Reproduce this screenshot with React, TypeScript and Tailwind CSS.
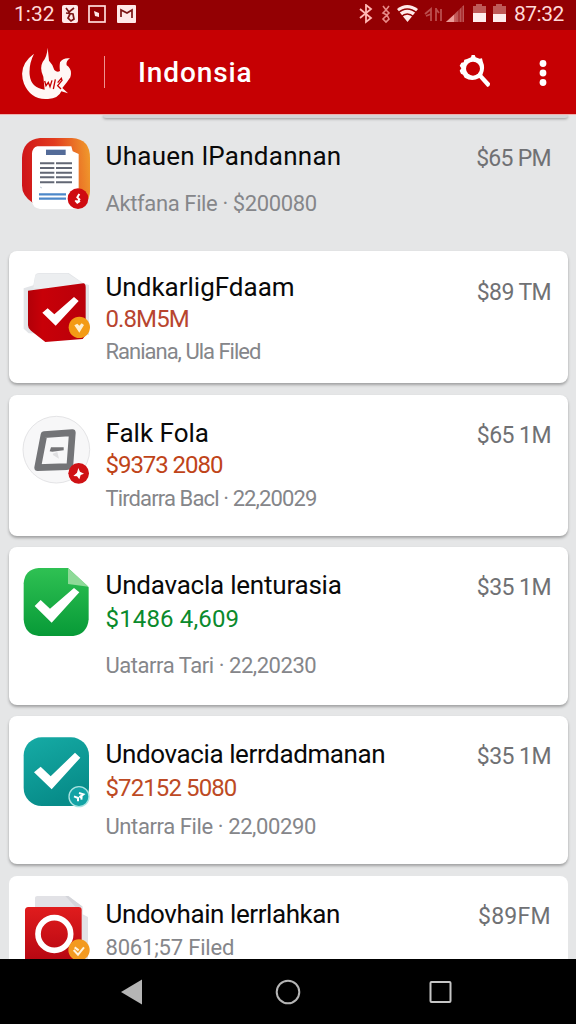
import React from "react";

type Row = {
  title: string;
  titleClass: string;
  amount?: string;
  amountClass?: string;
  detail: string;
  detailClass: string;
  price: string;
  priceClass: string;
  cardClass: string;
  textClass: string;
  icon: React.ReactNode;
};

const ReportIcon = () => (
  <>
    <defs>
      <linearGradient id="report" x1="0" x2="1" y1="0.3" y2="0.2">
        <stop offset="0" stopColor="#cf1519" />
        <stop offset="0.5" stopColor="#e23c1e" />
        <stop offset="1" stopColor="#f09a2c" />
      </linearGradient>
    </defs>
    <path d="M54 12H150Q204 15 204 72V170Q204 210 160 222L32 206Q0 185 0 155V72Q2 18 54 12Z" fill="url(#report)" />
    <path d="M46 37H148L152 52L170 60V170L196 200Q185 224 150 225H54Q32 222 30 202V58Q32 40 46 37Z" fill="#fff" />
    <path d="M72 47H131V63H72Z" fill="#536b98" />
    <path d="M54 88H97M102 88H150M54 102H97M102 102H150M54 116H97M102 116H150M54 130H97M102 130H150M54 145H97M102 145H150" stroke="#626774" strokeWidth="6" />
    <path d="M51 181H132M51 194H132" stroke="#4c88c9" strokeWidth="7" />
    <path d="M54 159L60 162" stroke="#c3ced9" strokeWidth="3" />
    <circle cx="168" cy="194" r="31" fill="#cf0b11" />
    <path d="M172 180L166 190L172 196L166 205M160 199L166 206L174 201" stroke="#fff" strokeWidth="6" fill="none" />
  </>
);

const BoxIcon = () => (
  <>
    <defs>
      <linearGradient id="box" x1="0" x2="1">
        <stop offset="0" stopColor="#b20008" />
        <stop offset="0.25" stopColor="#c80008" />
        <stop offset="1" stopColor="#b9000a" />
      </linearGradient>
    </defs>
    <path d="M5 55L34 46L40 14Q43 9 52 9H140L184 40L201 45V195L20 190L5 176Z" fill="#e3e5e8" />
    <path d="M34 55L40 16Q43 11 52 11H138L182 40L105 58Z" fill="#eceef0" />
    <path d="M18 62L184 40Q191 41 191 52V195L182 207L70 216L27 182Q18 176 18 166Z" fill="url(#box)" />
    <path d="M61 128L77 115L97 133L156 81L170 93L101 167Z" fill="#fff" />
    <circle cx="172" cy="172" r="32" fill="#f39b16" />
    <path d="M157 166L166 161L172 167L179 160L186 165L172 188Z" fill="#fff0d0" />
  </>
);

const FrameIcon = () => (
  <>
    <circle cx="103" cy="107" r="100" fill="#f7f7f8" stroke="#e4e4e6" strokeWidth="3" />
    <path d="M66 62L151 56L144 150Q142 158 135 158L47 161Z" fill="#f7f7f8" stroke="#737477" strokeWidth="20" strokeLinejoin="round" />
    <path d="M83 112L87 100H125V109L91 113Z" fill="#747477" />
    <path d="M92 119L106 114L111 134L94 124Z" fill="#dfdfe1" />
    <circle cx="170" cy="178" r="31" fill="#cf1114" />
    <path d="M169 162L174 173L186 179L176 183L172 196L165 187L154 186L165 176Z" fill="#fff" />
  </>
);

const GreenIcon = () => (
  <>
    <defs>
      <linearGradient id="green" x1="0" x2="0" y1="0" y2="1">
        <stop offset="0" stopColor="#2fc153" />
        <stop offset="1" stopColor="#079a37" />
      </linearGradient>
    </defs>
    <path d="M50 6H138L200 64V160Q196 204 154 210H50Q8 206 5 160V52Q8 10 50 6Z" fill="url(#green)" />
    <path d="M138 6L200 62L138 54Z" fill="#8eda98" />
    <path d="M38 120L56 102L84 128L156 66L172 79L89 170Z" fill="#fff" />
  </>
);

const TealIcon = () => (
  <>
    <defs>
      <linearGradient id="teal" x1="0" x2="0.4" y1="0" y2="1">
        <stop offset="0" stopColor="#16aba5" />
        <stop offset="1" stopColor="#078c89" />
      </linearGradient>
    </defs>
    <rect x="5" y="7" width="196" height="206" rx="54" fill="url(#teal)" />
    <path d="M36 112L56 95L86 124L159 53L175 68L89 163Z" fill="#fff" />
    <circle cx="171" cy="185" r="30" fill="#12a3a5" stroke="#a9e3e0" strokeWidth="4" />
    <path d="M156 184L168 189L168 199M171 174L184 178L172 187M180 176L178 194" stroke="#fff" strokeWidth="6" fill="none" />
  </>
);

const RecordIcon = () => (
  <>
    <defs>
      <linearGradient id="record" x1="0" x2="0" y1="0" y2="1">
        <stop offset="0" stopColor="#e01c1d" />
        <stop offset="1" stopColor="#b60712" />
      </linearGradient>
    </defs>
    <path d="M39 40V8Q39 3 46 3H139L182 35V58L198 66V200H150V40Z" fill="#e2e2e6" />
    <path d="M130 3H139L182 35H160Z" fill="#d4d5da" />
    <path d="M19 36H170Q179 36 179 45V200H9V47Q9 36 19 36Z" fill="url(#record)" />
    <circle cx="97" cy="117" r="49" fill="none" stroke="#fff" strokeWidth="17" />
    <circle cx="171" cy="165" r="32" fill="#f39a20" />
    <path d="M155 165L168 179L186 157M158 157L170 166" stroke="#fff3dd" strokeWidth="6" fill="none" />
  </>
);

const rows: Row[] = [
  {
    title: "Uhauen lPandannan",
    titleClass: "tracking-[0.27px]",
    detail: "Aktfana File · $200080",
    detailClass: "mt-[18px] tracking-[-0.38px]",
    price: "$65 PM",
    priceClass: "mt-[28px] tracking-[-0.7px]",
    cardClass: "h-[136px]",
    textClass: "mt-[25px]",
    icon: <ReportIcon />,
  },
  {
    title: "UndkarligFdaam",
    titleClass: "",
    amount: "0.8M5M",
    amountClass: "tracking-[-0.9px] text-[#b8452f]",
    detail: "Raniana, Ula Filed",
    detailClass: "mt-[3px] tracking-[-1px]",
    price: "$89 TM",
    priceClass: "mt-[26px] tracking-[-0.6px]",
    cardClass: "h-[132px] bg-white shadow-[0_2px_3px_rgba(0,0,0,0.3)]",
    textClass: "mt-[20px]",
    icon: <BoxIcon />,
  },
  {
    title: "Falk Fola",
    titleClass: "",
    amount: "$9373 2080",
    amountClass: "tracking-[-1.05px] text-[#bf4419]",
    detail: "Tirdarra Bacl · 22,20029",
    detailClass: "mt-[4px] tracking-[-0.88px]",
    price: "$65 1M",
    priceClass: "mt-[25px] tracking-[-0.55px]",
    cardClass: "mt-3 h-[141px] bg-white shadow-[0_2px_3px_rgba(0,0,0,0.3)]",
    textClass: "mt-[22px]",
    icon: <FrameIcon />,
  },
  {
    title: "Undavacla lenturasia",
    titleClass: "tracking-[-0.22px]",
    amount: "$1486 4,609",
    amountClass: "mt-[2px] tracking-[0.15px] text-[#0a8a2c]",
    detail: "Uatarra Tari · 22,20230",
    detailClass: "mt-[17px] tracking-[-0.45px]",
    price: "$35 1M",
    priceClass: "mt-[25px] tracking-[-0.55px]",
    cardClass: "mt-[11px] h-[158px] bg-white shadow-[0_2px_3px_rgba(0,0,0,0.3)]",
    textClass: "mt-[22px]",
    icon: <GreenIcon />,
  },
  {
    title: "Undovacia lerrdadmanan",
    titleClass: "tracking-[-0.39px]",
    amount: "$72152 5080",
    amountClass: "mt-[2px] tracking-[-0.9px] text-[#bd4a24]",
    detail: "Untarra File · 22,00290",
    detailClass: "mt-[9px] tracking-[-0.4px]",
    price: "$35 1M",
    priceClass: "mt-[25px] tracking-[-0.55px]",
    cardClass: "mt-[11px] h-[148px] bg-white shadow-[0_2px_3px_rgba(0,0,0,0.3)]",
    textClass: "mt-[22px]",
    icon: <TealIcon />,
  },
  {
    title: "Undovhain lerrlahkan",
    titleClass: "tracking-[-0.42px]",
    detail: "8061;57 Filed",
    detailClass: "mt-[4px] tracking-[-0.2px]",
    price: "$89FM",
    priceClass: "mt-[25px] tracking-[0.3px]",
    cardClass: "mt-3 h-[140px] bg-white",
    textClass: "mt-[22px]",
    icon: <RecordIcon />,
  },
];

const StatusBar = () => (
  <div className="flex h-[30px] shrink-0 items-center bg-[#930003] pr-3 pb-[2px] pl-[14px] text-[21px] leading-none text-[#ffdad8]">
    <span className="w-12 whitespace-nowrap">1:32</span>
    <svg width="75" height="19" viewBox="0 0 75 19">
      <rect x="0" y="0" width="16" height="18" rx="2" fill="#ffe9e9" />
      <path d="M4 3L7 7L12 3M4 8L11 9L12 14L9 16L6 13L8 9" stroke="#7b1414" strokeWidth="1.7" fill="none" />
      <rect x="27" y="1" width="16" height="16" fill="none" stroke="#ffdcdc" strokeWidth="1.7" />
      <path d="M32 6L37 8V12L33 11Z" fill="#ffe9e9" />
      <rect x="55" y="0" width="19" height="18" rx="1" fill="#ffe9e9" />
      <path d="M59 12V5L65 8L70 5V13" stroke="#7b1414" strokeWidth="1.7" fill="none" />
    </svg>
    <svg className="mr-[7px] ml-auto" width="148" height="20" viewBox="0 0 148 20">
      <path d="M1 5L12 14L7 18V1L12 5L1 14" stroke="#ffb9b5" strokeWidth="1.8" fill="none" />
      <path d="M24 2L27 6L30 2M27 6L24 9L28 11L24 15L27 18L30 15L28 11L30 9L27 6" stroke="#e88a88" strokeWidth="1.6" fill="none" />
      <path d="M38 5Q48 -3 59 5L48.500 18Z" fill="#ffe9e9" />
      <path d="M39 9Q48 1 58 9M42 13Q48 7 55 13" stroke="#930003" strokeWidth="1.3" fill="none" />
      <path d="M66 10L72 5V17M72 10L67 12M77 4V17M82 5V17M77 5L80 9" stroke="#bb4e4e" strokeWidth="1.8" fill="none" />
      <path d="M87 18L105 1V18Z" fill="#bd5555" />
      <path d="M87 18L97 9V18Z" fill="#ec9c98" />
      <path d="M100 5V18M96 9V18M103 3V18" stroke="#930003" strokeWidth="0.8" />
      <path d="M114 2H117V0H123V2H127V18H114Z" fill="#bf5a58" />
      <rect x="114" y="9" width="13" height="9" fill="#ffeded" />
      <path d="M134 2H137V0H143V2H147V18H134Z" fill="#bf5a58" />
      <rect x="134" y="10" width="13" height="8" fill="#ffeded" />
    </svg>
    <span className="w-[50px] tracking-[-0.5px] whitespace-nowrap">87:32</span>
  </div>
);

const AppBar = () => (
  <div className="flex h-[84px] shrink-0 items-center bg-[#c60003] pl-5 text-white">
    <svg width="54" height="54" viewBox="0 0 162 162">
      <path d="M42 26Q-8 62 12 116Q32 164 84 162Q116 160 124 139L144 145L127 129Q143 110 151 97Q158 73 140 61Q137 49 150 40Q130 37 120 52Q118 67 120 78Q111 83 103 75Q100 60 87 47L83 8Q81 36 68 51Q58 70 70 95L74 134Q33 129 29 90Q26 58 42 26Z" fill="#fff7f5" />
      <path d="M74 108L78 122L85 112L90 125L96 106M100 132L106 103M113 113L124 100L126 106L113 122L123 132" stroke="#c60003" strokeWidth="4" fill="none" />
    </svg>
    <div className="ml-[30px] h-8 w-px bg-[#ee9290]" />
    <h1 className="mt-[2px] ml-[33px] w-[320px] text-[28px] leading-8 font-medium tracking-[0.9px] whitespace-nowrap">Indonsia</h1>
    <svg width="34" height="36" viewBox="0 0 102 108" className="shrink-0">
      <path d="M39 10L41 3H50L53 10L65 14L72 13L74 22Q83 42 73 63L96 88Q97 97 88 99L64 72Q42 85 20 71L15 62L9 59L5 50L10 43L5 35L10 26L17 25L19 17L27 15Z" fill="#fff" />
      <circle cx="45" cy="44" r="21" fill="#c60003" />
    </svg>
    <svg width="8" height="28" viewBox="0 0 8 28" className="mt-[2px] ml-[47px] shrink-0">
      <circle cx="4" cy="4.500" r="3.4" fill="#fff" />
      <circle cx="4" cy="14" r="3.4" fill="#fff" />
      <circle cx="4" cy="23.500" r="3.4" fill="#fff" />
    </svg>
  </div>
);

const ListRow = ({ row }: { row: Row }) => (
  <div className={`flex shrink-0 items-start rounded-lg pr-[17px] pl-[13px] ${row.cardClass}`}>
    <svg width="70" height="77" viewBox="0 0 210 231" className="mt-[19px] shrink-0">
      {row.icon}
    </svg>
    <div className={`ml-[13.5px] flex flex-1 flex-col whitespace-nowrap ${row.textClass}`}>
      <div className={`text-[26px] leading-8 text-[#090909] ${row.titleClass}`}>{row.title}</div>
      {row.amount && <div className={`text-[24px] leading-8 ${row.amountClass}`}>{row.amount}</div>}
      <div className={`text-[22px] leading-7 text-[#85868a] ${row.detailClass}`}>{row.detail}</div>
    </div>
    <div className={`text-[23px] leading-8 whitespace-nowrap text-[#707174] ${row.priceClass}`}>{row.price}</div>
  </div>
);

const NavBar = () => (
  <div className="flex h-[65px] shrink-0 items-center bg-black pt-px pl-[120px]">
    <svg width="24" height="28" viewBox="0 0 24 28">
      <path d="M1 14L22 1.500V26.500Z" fill="#b5b5b5" />
    </svg>
    <svg width="28" height="28" viewBox="0 0 28 28" className="ml-[130px]">
      <circle cx="14" cy="14" r="11.300" fill="none" stroke="#b5b5b5" strokeWidth="2" />
    </svg>
    <svg width="26" height="26" viewBox="0 0 26 26" className="ml-[126px]">
      <rect x="2.500" y="3" width="20" height="20" rx="1" fill="none" stroke="#c5c5c5" strokeWidth="2" />
    </svg>
  </div>
);

const App: React.FC = () => {
  return (
    <div className="flex h-[1024px] w-[576px] flex-col overflow-hidden bg-[#e5e6e7] font-['Roboto','Liberation_Sans',sans-serif]">
      <StatusBar />
      <AppBar />
      <div className="flex min-h-0 flex-1 flex-col overflow-hidden border-t border-[#eeb0ae] px-2 pl-[9px]">
        {/* bottom edge of the card scrolled under the app bar */}
        <div className="-mb-[3px] ml-[94px] h-[3px] shrink-0 rounded-b bg-[#d3d5d8] shadow-[0_1px_3px_rgba(0,0,0,0.35)]" />
        {rows.map((row) => (
          <ListRow key={row.title} row={row} />
        ))}
      </div>
      <NavBar />
    </div>
  );
};

export default App;
